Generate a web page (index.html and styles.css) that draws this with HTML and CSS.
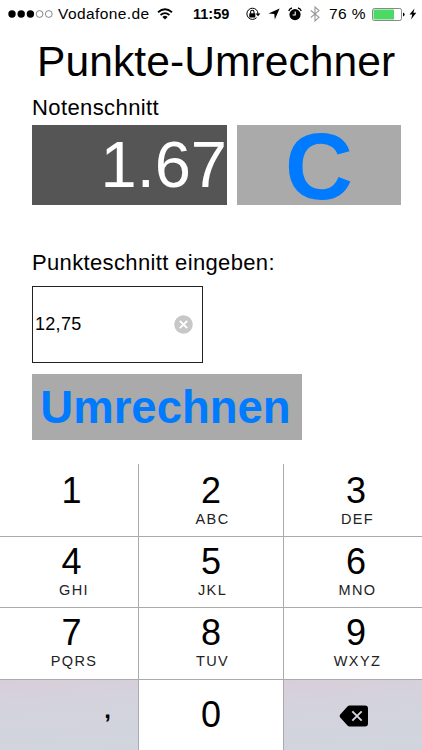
FILE: index.html
```html
<!DOCTYPE html>
<html lang="de">

<head>
    <title>Punkte-Umrechner</title>
    <meta charset="utf-8">
    <meta name="viewport" content="width=device-width, initial-scale=1">
    <link rel="stylesheet" href="styles.css">
</head>

<body>
    <div class="status-bar">
        <svg class="signal" width="46" height="10" viewBox="0 0 46 10">
            <circle cx="4" cy="5" r="3.7" />
            <circle cx="13.2" cy="5" r="3.7" />
            <circle cx="22.4" cy="5" r="3.7" />
            <circle class="empty" cx="31.6" cy="5" r="3.4" />
            <circle class="empty" cx="40.8" cy="5" r="3.4" />
        </svg>
        <span class="carrier">Vodafone.de</span>
        <svg class="wifi" width="16" height="12" viewBox="0 0 16 12">
            <path d="M1 4.3Q8-1.7 15 4.3M3.5 7Q8 3.2 12.5 7" fill="none" stroke="#000" stroke-width="1.8" />
            <path d="M5.4 8.9Q8 6.8 10.6 8.9L8 11.6z" />
        </svg>
        <span class="time">11:59</span>
        <svg class="lock" width="16" height="14" viewBox="0 0 16 14">
            <path d="M11.4 2.8A5.6 5.6 0 1 0 11.6 10.600M11.4 2.800Q13 4.500 13 7" fill="none" stroke="#000" stroke-width="1" />
            <path d="M10.600 6.400h4.800L13 9.200z" />
            <rect x="4.300" y="6.200" width="6" height="4.200" rx=".5" />
            <path d="M5.600 6.500V5a1.700 1.700 0 0 1 3.400 0v1.500" fill="none" stroke="#000" stroke-width="1.100" />
        </svg>
        <svg class="location" width="12" height="12" viewBox="0 0 12 12">
            <path d="M11.6.5L6.8 11.5 6.3 6 .5 5.6z" />
        </svg>
        <svg class="alarm" width="14" height="14" viewBox="0 0 14 14">
            <circle cx="7" cy="7.6" r="5.6" />
            <path d="M.8 4A4 4 0 0 1 4 1M10 1a4 4 0 0 1 3.2 3" fill="none" stroke="#000" stroke-width="1.3" />
            <path d="M7.2 4.5V8H4.6" fill="none" stroke="#fff" stroke-width="1.1" />
        </svg>
        <svg class="bluetooth" width="10" height="16" viewBox="0 0 10 16">
            <path d="M.8 4.5L9 11.3 5 15V1l4 3.6L.8 11.5" fill="none" stroke="#999" stroke-width="1.1" />
        </svg>
        <span class="percent">76 %</span>
        <svg class="battery" width="33" height="13" viewBox="0 0 33 13">
            <rect x=".5" y=".5" width="29" height="12" rx="1.8" fill="#fff" stroke="#888" />
            <rect x="1.5" y="1.5" width="20.5" height="10" rx=".8" fill="#4cd964" />
            <path d="M31 4.5q1.6.3 1.6 2T31 8.5z" />
        </svg>
        <svg class="bolt" width="8" height="12" viewBox="0 0 8 12">
            <path d="M5.5.5L.5 6.6h2.8L2 11.5l5.3-6.7H4.4z" />
        </svg>
    </div>

    <div class="converter">
        <h1 class="title">Punkte-Umrechner</h1>
        <div class="label">Notenschnitt</div>
        <div class="result-row">
            <div class="result">1.67</div>
            <button class="clear-button">C</button>
        </div>
        <div class="label label-input">Punkteschnitt eingeben:</div>
        <div class="points-field">
            <span>12,75</span>
            <svg width="19" height="19" viewBox="0 0 19 19">
                <circle cx="9.5" cy="9.5" r="9.3" fill="#c7c7c7" />
                <path d="M5.8 5.8l7.4 7.4M13.2 5.8l-7.4 7.4" stroke="#fff" stroke-width="1.9" />
            </svg>
        </div>
        <button class="convert-button">Umrechnen</button>
    </div>

    <div class="keypad">
        <div class="key"><b>1</b></div>
        <div class="key"><b>2</b><span>ABC</span></div>
        <div class="key"><b>3</b><span>DEF</span></div>
        <div class="key"><b>4</b><span>GHI</span></div>
        <div class="key"><b>5</b><span>JKL</span></div>
        <div class="key"><b>6</b><span>MNO</span></div>
        <div class="key"><b>7</b><span>PQRS</span></div>
        <div class="key"><b>8</b><span>TUV</span></div>
        <div class="key"><b>9</b><span>WXYZ</span></div>
        <div class="key key-comma">,</div>
        <div class="key key-zero"><b>0</b></div>
        <div class="key key-delete">
            <svg width="30" height="22" viewBox="0 0 30 22">
                <path d="M10.5.5H26a3 3 0 0 1 3 3v15a3 3 0 0 1-3 3H10.5q-1 0-1.8-.8L1.2 12.4q-1.2-1.4 0-2.8L8.7 1.3Q9.5.5 10.5.5z" />
                <path d="M13.3 6.3l9.4 9.4M22.7 6.3l-9.4 9.4" stroke="#d6d5df" stroke-width="1.9" />
            </svg>
        </div>
    </div>
</body>

</html>
```
FILE: styles.css
```css
* {
    box-sizing: border-box;
}

body {
    margin: 0;
    width: 422px;
    height: 750px;
    overflow: hidden;
    display: flex;
    flex-direction: column;
    background: #fff;
    color: #000;
    font-family: "Liberation Sans", Arial, sans-serif;
}

button {
    border: 0;
    padding: 0;
    font-family: inherit;
    font-weight: bold;
    color: #007aff;
    background: #aaa;
}

.status-bar {
    height: 28px;
    padding-left: 8px;
    display: flex;
    align-items: center;
    font-size: 15.5px;
    line-height: 28px;
    white-space: nowrap;
}

.status-bar svg {
    flex: none;
}

.signal .empty {
    fill: #fff;
    stroke: #555;
    stroke-width: .7;
}

.carrier {
    width: 93px;
    margin-left: 4px;
    letter-spacing: .4px;
}

.wifi {
    margin-left: 6px;
}

.time {
    width: 38px;
    margin-left: 20px;
    font-size: 14.5px;
    font-weight: bold;
}

.lock {
    margin-left: 14px;
}

.location {
    margin-left: 7px;
}

.alarm {
    margin-left: 8px;
}

.bluetooth {
    margin-left: 8px;
}

.percent {
    width: 39px;
    margin-left: 9px;
    letter-spacing: .4px;
}

.battery {
    margin-left: 4px;
}

.bolt {
    margin-left: 4px;
}

.converter {
    height: 436px;
    padding: 9px 21px 0 32px;
    display: flex;
    flex-direction: column;
    align-items: flex-start;
}

.title {
    margin: 0 0 0 5px;
    font-size: 42.5px;
    font-weight: normal;
    line-height: 49px;
    letter-spacing: .1px;
    white-space: nowrap;
}

.label {
    margin-top: 9px;
    font-size: 22px;
    line-height: 26px;
    letter-spacing: .4px;
}

.result-row {
    margin-top: 4px;
    display: flex;
    gap: 10px;
}

.result {
    width: 195px;
    height: 80px;
    background: #555;
    color: #fff;
    font-size: 65px;
    line-height: 80px;
    text-align: right;
}

.clear-button {
    width: 164px;
    height: 80px;
    font-size: 94px;
    line-height: 83px;
}

.label-input {
    margin-top: 45px;
    letter-spacing: .35px;
}

.points-field {
    width: 171px;
    height: 77px;
    margin-top: 10px;
    padding: 0 9px 0 2px;
    border: 1px solid #222;
    display: flex;
    align-items: center;
    justify-content: space-between;
    font-size: 18px;
    letter-spacing: .3px;
}

.convert-button {
    width: 270px;
    height: 66px;
    margin-top: 11px;
    padding-right: 3px;
    font-size: 45.5px;
    line-height: 68px;
}

.keypad {
    height: 286px;
    display: grid;
    grid-template-columns: 139px 145px 138px;
    grid-template-rows: 73px 71px 72px 70px;
}

.key {
    padding-top: 5px;
    border-right: 1px solid #aaa;
    border-bottom: 1px solid #aaa;
    display: flex;
    flex-direction: column;
    align-items: center;
}

.key:nth-child(-n+3) {
    padding-top: 7px;
}

.key:nth-child(3n) {
    padding-left: 6px;
    border-right: 0;
}

.key:nth-child(3n+1) {
    padding-left: 5px;
}

.key:nth-child(n+10) {
    border-bottom: 0;
}

.key b {
    font-size: 36px;
    font-weight: normal;
    line-height: 40px;
}

.key span {
    padding-left: 3px;
    font-size: 14.5px;
    line-height: 16px;
    letter-spacing: 1.4px;
    color: #222;
}

.key:nth-child(3n+1) span {
    padding-left: 5px;
}

.key-comma,
.key-delete {
    background: linear-gradient(175deg, #d8ceda 0%, #d4d3dd 35%, #d0d5dd 100%);
}

.key-comma {
    padding-top: 10px;
    padding-right: 27px;
    align-items: flex-end;
    font-size: 24px;
    font-weight: bold;
    line-height: 40px;
}

.key-zero {
    padding-top: 15px;
}

.key-delete {
    padding-top: 25px;
    padding-right: 4px;
}
```
